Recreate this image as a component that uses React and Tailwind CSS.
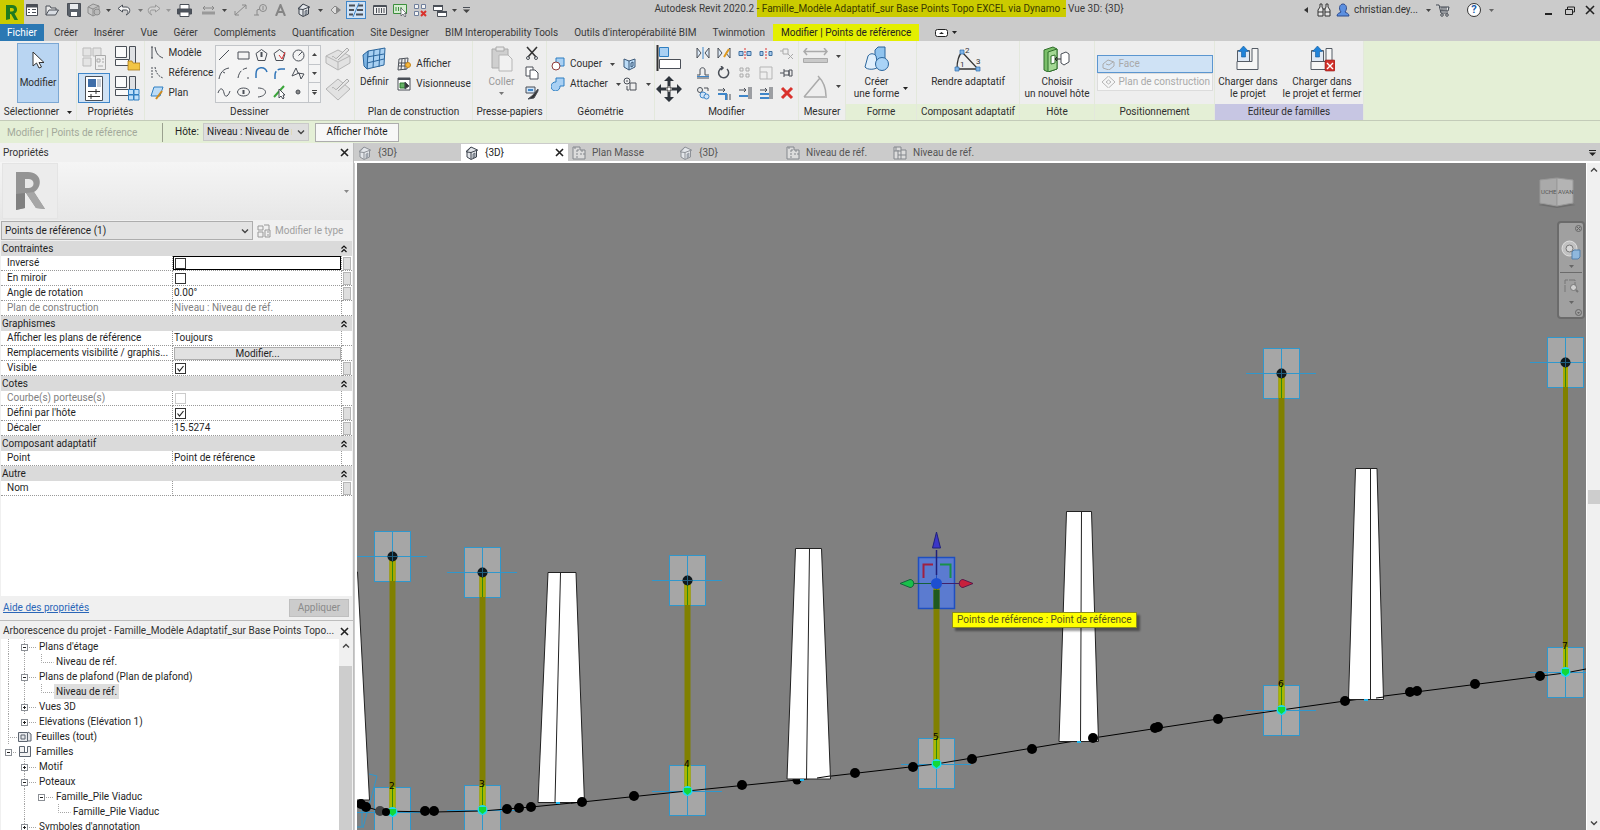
import React, { useState } from 'react';
import clsx from 'clsx';

function Svg({ w, h, children, className }) {
  return (
    <svg width={w} height={h} viewBox={`0 0 ${w} ${h}`} fill="none" stroke="#4a4f57" aria-hidden="true" className={clsx("shrink-0", className)}>
      {children}
    </svg>
  );
}

function Arrow({ className, color = "#444" }) {
  return (
    <Svg w={5} h={3} className={className}>
      <path d="M0 0h5L2.5 3z" fill={color} stroke="none" />
    </Svg>
  );
}

function CloseIcon({ size = 9 }) {
  return (
    <Svg w={size} h={size}>
      <path d={`M1 1L${size - 1} ${size - 1}M${size - 1} 1L1 ${size - 1}`} stroke="#222" strokeWidth="1.6" />
    </Svg>
  );
}

function Chevron({ up, className }) {
  return (
    <Svg w={8} h={6} className={className}>
      <path d={up ? "M1 4.5l3-3 3 3" : "M1 1.5l3 3 3-3"} stroke="#444" strokeWidth="1.4" />
    </Svg>
  );
}

function HouseIcon({ faded }) {
  const line = faded ? "#8d9197" : "#3c434d";
  return (
    <Svg w={14} h={14}>
      <path d="M1 5.5L6 1l6.5 3-1 1v6L6 13.500 2 11V6z" fill="#e3e6ea" stroke={line} />
      <path d="M6 1L1.500 6M6 6.500V13M6 6.500L12.500 4M2 6l4 .5" stroke={line} />
      <path d="M8 8l2-1v4l-2 1z" fill="#aab2bd" stroke={line} strokeWidth=".6" />
    </Svg>
  );
}

function SheetIcon({ double }) {
  return (
    <Svg w={14} h={14}>
      <path d="M1 1h7v3h5v9H1z" fill="#dcdcdc" stroke="#83878c" />
      {double
        ? <path d="M5 4v9M1 5h7M8 4v9M5 9h8M3 1v4" stroke="#83878c" />
        : <path d="M5 4h3M5 4v9M8 8h5M10 4v2M3 1v2" stroke="#83878c" strokeDasharray="2 1" />}
    </Svg>
  );
}

/* Quick access toolbar */
function QuickAccess() {
  const items = [
    ["w-4", "Propriétés", <Svg w={12} h={12}><path d="M.5.5h11v11H.5z" fill="#fff" /><path d="M0 2h12" strokeWidth="3" /><path d="M2 5.500h2M2 8.500h2M6 5.500h4M6 8.500h4" /></Svg>],
    ["w-6", "Ouvrir", <Svg w={14} h={11}><path d="M1 10V1h4l1 2h5v2" fill="#e8e8e8" /><path d="M1 10l3-5h9.500l-3 5z" fill="#d9dde3" /></Svg>],
    ["w-5", "Enregistrer", <Svg w={14} h={14}><path d="M.5.5h13v13H2l-1.500-1.500z" fill="#596069" /><path d="M3 1h8v5H3z" fill="#e9ecef" stroke="none" /><path d="M4 9h6v4H4z" fill="#fff" stroke="none" /></Svg>],
    ["w-5", "Synchroniser", <Svg w={14} h={14}><path d="M1 4l5-3 6 2v7l-6 3-5-3z" fill="#c4c4c4" stroke="#8d8d8d" /><path d="M6 6v7M1 4l5 2 6-3" stroke="#8d8d8d" /><circle cx="10" cy="9" r="3" fill="#b9b9b9" stroke="#8d8d8d" /></Svg>],
    ["w-2", "Options de synchronisation", <Arrow />],
    ["w-6", "Annuler", <Svg w={14} h={12}><path d="M5.500 1L1 4.500l4.500 3.500V6H9c2.500 0 2.500 3 0 5 5-1.500 5-8 0-8H5.500z" fill="#f4f4f4" /></Svg>],
    ["w-2", "Liste annuler", <Arrow color="#777" />],
    ["w-5", "Rétablir", <Svg w={14} h={12}><path d="M8.500 1L13 4.500 8.500 8V6H5c-2.500 0-2.500 3 0 5-5-1.500-5-8 0-8h3.500z" fill="#d2d2d2" stroke="#999" /></Svg>],
    ["w-2", "Liste rétablir", <Arrow color="#999" />],
    ["w-6", "Imprimer", <Svg w={15} h={13}><path d="M3 5V.5h9V5" fill="#fff" /><path d="M.5 5h14v5H.5z" fill="#4c535c" /><path d="M3 8h9v4.500H3z" fill="#fff" /></Svg>],
    ["w-6", "Mesurer", <Svg w={13} h={9}><path d="M1 2h11M3 0L1 2l2 2M10 0l2 2-2 2" stroke="#888" /><path d="M0 7h13" stroke="#999" strokeWidth="3" /></Svg>],
    ["w-2", "Options de mesure", <Arrow />],
    ["w-6", "Cote alignée", <Svg w={13} h={12}><path d="M1 11L12 1M1 7v4h4M8 1h4v4" stroke="#8a8a8a" /></Svg>],
    ["w-4", "Étiquette", <Svg w={13} h={12}><circle cx="9" cy="4" r="3.500" stroke="#8a8a8a" /><path d="M9 2v4M6 5L3 6v5M0 11h5" stroke="#8a8a8a" /></Svg>],
    ["w-6", "Texte", <Svg w={11} h={12}><path d="M1 12L5.500 1 10 12M2.500 8h6" stroke="#858585" strokeWidth="2" /></Svg>],
    ["w-6", "Vue 3D", <HouseIcon />],
    ["w-2", "Options vue 3D", <Arrow />],
    ["w-[22px]", "Coupe", <Svg w={12} h={12}><path d="M6 2l4 4-4 4-4-4z" fill="#ddd" stroke="#888" /><path d="M7 2l5 4-5 4z" fill="#888" stroke="none" /></Svg>],
    ["w-5 h-[18px] border border-[#3f86c9] bg-[#cfe2f5]", "Lignes fines", <Svg w={16} h={14}><path d="M1 2.500h6M10 2.500h5M1 7h5M9 7h6M1 11.500h4M8 11.500h7" strokeWidth="2" /><path d="M11 0L5 14" stroke="#3f86c9" /></Svg>],
    ["w-6 pl-1", "Fermer les vues masquées", <Svg w={14} h={10}><path d="M.5.5h13v9H.5z" fill="#eee" /><path d="M0 1.500h14M3.500 3v5M6 3v5M8.500 3v5M11 3v5" /></Svg>],
    ["w-5", "Interface utilisateur", <Svg w={14} h={13}><path d="M.5.5h13v9H.5z" fill="#d6ecd2" stroke="#3c8f3c" /><path d="M3 3v4M5.500 3v4M8 3v4" stroke="#3c8f3c" /><path d="M8 4v8l2-2 2 3 1-1-1.500-2.500h2z" fill="#fff" strokeWidth=".7" /></Svg>],
    ["w-5", "Fermer inactives", <Svg w={13} h={13}><path d="M.5.5h4v4h-4zM7.500.5h4v4h-4zM.5 7.500h4v4h-4z" fill="#f4f4f4" stroke="#6f7f9c" /><path d="M7 7l5 5M12 7l-5 5" stroke="#d9322c" strokeWidth="2" /></Svg>],
    ["w-5", "Changer de fenêtre", <Svg w={14} h={13}><path d="M.5 1.500h9v5h-9z" fill="#fff" /><path d="M0 2h10" strokeWidth="2" /><path d="M4.500 7.500h9v5h-9z" fill="#fff" /><path d="M4 8h10" strokeWidth="2" /></Svg>],
    ["w-2", "Options de fenêtre", <Arrow />],
    ["w-4", "Personnaliser", <Svg w={7} h={6}><path d="M0 .5h7" /><path d="M0 2.500h7L3.500 6z" fill="#444" stroke="none" /></Svg>],
  ];
  return (
    <div className="flex shrink-0 items-center h-5">
      {items.map(([width, label, icon], idx) => (
        <button key={idx} aria-label={label} className={clsx("flex shrink-0 items-center justify-center", width)}>
          {icon}
        </button>
      ))}
    </div>
  );
}

function TitleBar() {
  return (
    <header className="flex items-start h-6 overflow-hidden">
      <button aria-label="Revit" className="flex items-center justify-center w-6 h-6 shrink-0 bg-[#cbcb00]">
        <Svg w={14} h={15}>
          <path d="M1 0h6c6 0 6.500 7 2.500 8.500L13 15H9.500L6 9H5v5l-4 1z" fill="#1f7a1f" stroke="none" />
          <path d="M5 3h2c2.500 0 2.500 3.500 0 3.500H5z" fill="#cbcb00" stroke="none" />
        </Svg>
      </button>
      <QuickAccess />
      <h1 className="flex-1 text-center whitespace-nowrap leading-[17px] text-[#3a3a3a]">
        Autodesk Revit 2020.2{' '}
        <mark className="inline-block bg-[#cbcb00] text-[#3a3a00]">- Famille_Modèle Adaptatif_sur Base Points Topo EXCEL via Dynamo -</mark>
        {' '}Vue 3D: {'{3D}'}
      </h1>
      <div className="flex items-center shrink-0 h-5">
        <button aria-label="Réduire la recherche" className="w-2">
          <Svg w={4} h={6}><path d="M4 0v6L0 3z" fill="#333" stroke="none" /></Svg>
        </button>
        <button aria-label="Rechercher" className="w-6 flex justify-center">
          <Svg w={14} h={14}>
            <path d="M3 1h2v3l1 2v7H1V7l2-3zM9 1h2v3l2 3v6H8V6l1-2z" fill="#e6e6e6" stroke="#333" />
            <path d="M6 6h2M1 9h5M8 9h5" stroke="#333" />
          </Svg>
        </button>
        <button className="flex items-center gap-1 text-[#333]">
          <Svg w={14} h={14}>
            <path d="M1 13c0-3 3-3 4-4-3-4-1-8 2-8s5 4 2 8c1 1 4 1 4 4z" fill="#5b8fe0" stroke="#2d4c8f" />
          </Svg>
          <span>christian.dey...</span>
          <Arrow className="ml-1" />
        </button>
        <button aria-label="Autodesk App Store" className="flex justify-center w-6">
          <Svg w={14} h={13}>
            <path d="M0 1h3l2 8h7M4 3h9l-1 4H5" fill="#eee" stroke="#3c434d" />
            <path d="M6 3v4M8 3v4M10 3v4" stroke="#3c434d" />
            <circle cx="6" cy="11" r="1.300" /><circle cx="11" cy="11" r="1.300" />
          </Svg>
        </button>
        <button aria-label="Aide" className="flex items-center gap-2 ml-3">
          <span className="w-[14px] h-[14px] rounded-full border border-[#333] bg-white text-[11px] leading-3 font-bold text-[#1d5fae] text-center">?</span>
          <Arrow color="#666" />
        </button>
        <button aria-label="Réduire" className="ml-[42px] w-6 flex justify-center pt-2"><Svg w={7} h={2}><path d="M0 1h7" stroke="#222" strokeWidth="2" /></Svg></button>
        <button aria-label="Restaurer" className="w-5 flex justify-center">
          <Svg w={10} h={9}><path d="M2.500 3V1h7v5h-2M.5 3.500h7v5h-7z" stroke="#222" /></Svg>
        </button>
        <button aria-label="Fermer" className="w-5 flex justify-center"><CloseIcon size={10} /></button>
      </div>
    </header>
  );
}

function RibbonTabs() {
  const tabs = ["Créer", "Insérer", "Vue", "Gérer", "Compléments", "Quantification", "Site Designer", "BIM Interoperability Tools", "Outils d'interopérabilité BIM", "Twinmotion"];
  return (
    <nav className="flex items-center h-[17px] whitespace-nowrap text-[#3a3a3a]">
      <button className="w-11 h-full shrink-0 bg-[#2b78b3] text-white">Fichier</button>
      <div className="flex pl-[2px]">
        {tabs.map((tab) => (
          <button key={tab} className="px-2">{tab}</button>
        ))}
      </div>
      <button className="h-full px-2 bg-[#e4ef00] text-[#222]">Modifier | Points de référence</button>
      <button aria-label="Réduire le ruban" className="flex items-center gap-1 ml-4">
        <Svg w={13} h={8}><rect x=".5" y=".5" width="12" height="7" rx="2" fill="#fff" stroke="#222" /><path d="M4 5h5L6.500 3z" fill="#222" stroke="none" /></Svg>
        <Arrow color="#222" />
      </button>
    </nav>
  );
}

function Panel({ title, width, tone, titleIcon, children }) {
  return (
    <section className={clsx("flex flex-col shrink-0 bg-[#eeeeee] border-r border-[#e3e8dc]", width)}>
      <div className="flex h-[63px] pt-[2px] justify-center">{children}</div>
      <h2 className={clsx("flex h-4 items-center justify-center gap-2 whitespace-nowrap", tone)}>
        {title}
        {titleIcon}
      </h2>
    </section>
  );
}

function BigButton({ icon, lines, className, arrow }) {
  return (
    <button className={clsx("flex flex-col items-center whitespace-nowrap leading-3", className)}>
      <span className="flex items-center justify-center h-7 mt-[2px] mb-[3px]">{icon}</span>
      {lines.map((line) => <span key={line}>{line}</span>)}
      {arrow}
    </button>
  );
}

function SmallButton({ icon, label, arrow, className }) {
  return (
    <button aria-label={arrow || label} className={clsx("flex items-center h-5 gap-1 whitespace-nowrap", className)}>
      <span className="flex justify-center w-4">{icon}</span>
      {label}
      {arrow && <Arrow className="ml-1" />}
    </button>
  );
}

const drawIcons = [
  <path d="M2 12L12 2" />,
  <path d="M2 4h11v7H2z" />,
  <><path d="M7.500 1.500l5.500 4-2 7H4l-2-7z" /><path d="M7.500 4v5" strokeWidth="2" /></>,
  <><path d="M7.500 1.500l5.500 4-2 7H4l-2-7z" /><path d="M7 7l3 4 3-7" stroke="#d33" /></>,
  <><circle cx="7.500" cy="7.500" r="5.500" /><path d="M7.500 7.500L11 4" /></>,
  <path d="M2 13c1-6 4-10 10-11M6 6l2 1" />,
  <path d="M2 12c1-6 4-9 9-10M12 11v2" strokeDasharray="8 2" />,
  <path d="M2 12V8c0-8 9-8 11-2" stroke="#2f74b8" strokeWidth="1.500" />,
  <path d="M3 13V9c0-4 3-6 6-6h4" stroke="#2f74b8" strokeWidth="1.500" strokeDasharray="8 2" />,
  <path d="M1 10l4-8 2 5 6 1-3 5-2-6z" />,
  <path d="M1 8c2-6 5-5 6 0s4 4 6-2" />,
  <><ellipse cx="7.500" cy="7" rx="6" ry="4" /><path d="M7.500 5v4" strokeWidth="2" /></>,
  <path d="M4 3c10 0 10 8 0 9" />,
  <><path d="M2 12L12 1" stroke="#3aa53a" strokeWidth="2" /><path d="M7 4v9l2-2 2 3 1-1-1-3h2z" fill="#fff" /></>,
  <circle cx="7" cy="7" r="2" fill="#888" />,
];

const modifyIcons = [
  <><path d="M1 2v10l4-5zM13 2v10L9 7z" fill="#dbe9f7" /><path d="M7 1v12" stroke="#3f86c9" /></>,
  <><path d="M1 2v10l4-5zM13 2v10L9 7z" fill="#dbe9f7" /><path d="M12 3l-5 8" stroke="#e09a1f" strokeWidth="2" /></>,
  <><path d="M1 5.500h4v4H1zM9 5.500h4v4H9z" fill="#a9cdf0" stroke="#3f6f9f" /><path d="M7 2v11" stroke="#d33" strokeDasharray="2 1" /></>,
  <><path d="M1 5.500h3v4H1zM10 5.500h3v4h-3z" fill="#a9cdf0" stroke="#3f6f9f" /><path d="M7 2v11" stroke="#d33" strokeDasharray="2 1" /></>,
  <path d="M3 3h5v5H3zM0 5h3M8 8l5 5M13 8l-5 5" stroke="#aaa" />,
  <><path d="M1 12h12M1 9h3V4c0-3 5-3 5 0v5h4" /><path d="M1 10.500h12" stroke="#3f86c9" /></>,
  <path d="M10 3a5 5 0 1 1-5-1M4 0l2 2-2 2" strokeWidth="1.500" />,
  <path d="M2 2h3v3H2zM8 2h3v3H8zM2 8h3v3H2zM8 8h3v3H8z" stroke="#aaa" />,
  <path d="M1 1h12v12H1zM1 6h7v7" stroke="#b5b5b5" />,
  <path d="M4 7H0M4 3v8M4 5h5v4H4M9 4v6h3V4z" />,
  <><circle cx="4" cy="4" r="2.500" /><circle cx="7" cy="9" r="3" fill="#cfe3f7" stroke="#3f86c9" /><circle cx="10.500" cy="10.500" r="2.500" fill="#cfe3f7" stroke="#3f86c9" /><path d="M8 2h4v3" /></>,
  <><path d="M1 4h7M6 2l2 2-2 2M10 8v6M13 8v6" /><path d="M1 8h8v6" stroke="#3f86c9" strokeWidth="2" /></>,
  <><path d="M1 4h7M6 2l2 2-2 2M11 1v12M13 1v12" /><path d="M1 10h9" stroke="#3f86c9" strokeWidth="2" /></>,
  <><path d="M1 4h7M6 2l2 2-2 2M11 1v12M13 1v12" /><path d="M1 8h9M1 12h9" stroke="#3f86c9" strokeWidth="2" /></>,
  <path d="M2 2l10 10M12 2L2 12" stroke="#d9322c" strokeWidth="3" />,
];

function LoadIcon({ close }) {
  return (
    <Svg w={26} h={26}>
      <path d="M2.500 4.500h12v11h-12z" fill="#dfe9f5" stroke="#555c66" />
      <path d="M17 2.500h6v21h-21v-8h15z" fill="#f6f6f6" stroke="#555c66" />
      <path d="M8.500 0l5 5.500h-3V11h-4V5.500h-3z" fill="#1f83da" stroke="#12599b" strokeWidth=".6" />
      {close && <><rect x="16" y="14" width="10" height="11" rx="1" fill="#d0312b" stroke="#8f1d19" strokeWidth=".6" /><path d="M18 17l6 6M24 17l-6 6" stroke="#fff" strokeWidth="1.400" /></>}
    </Svg>
  );
}

function TypeIcon({ extra }) {
  return (
    <Svg w={26} h={26}>
      <path d="M1.500 1.500h11v11h-11zM1.500 14.500h13v6h-13z" fill="#fafafa" />
      <path d="M15.500 1.500h6v19h-7v-6h1z" fill="#dfe1e4" />
      {extra}
    </Svg>
  );
}

function SketchPlane({ flat }) {
  return (
    <Svg w={26} h={26}>
      <path d={flat ? "M13 3l12 10-12 11L1 13z" : "M1 11l12-6 12 6v7l-12 7-12-7z"} fill="#e2e2e2" stroke="#b5b5b5" />
      {!flat && <path d="M1 11l12 6 12-6M13 17v8" stroke="#b5b5b5" />}
      <path d="M7 12c2-2 3 3 5 1L22 3l2 2-11 10" fill="#e8e8e8" stroke="#a9a9a9" />
    </Svg>
  );
}

function Ribbon() {
  const green = "bg-[#e4efd6]";
  return (
    <div className="flex bg-[#e4efd6] border-b border-[#c3cbb9] text-[#2f2f2f] overflow-hidden">
      <Panel title="Sélectionner" width="w-[77px]" titleIcon={<Arrow color="#222" />}>
        <BigButton
          className="w-[42px] h-[60px] border border-[#7ba7d3] bg-[#b9d5f2]"
          lines={["Modifier"]}
          icon={<Svg w={14} h={18}><path d="M2 1v14l3.500-3 2.500 5 2.500-1L8 11.500h5z" fill="#fff" stroke="#333" /></Svg>}
        />
      </Panel>

      <Panel title="Propriétés" width="w-[68px]">
        <div className="grid grid-cols-2 grid-rows-2 w-full h-[60px] place-items-center">
          <button aria-label="Propriétés du type">
            <Svg w={26} h={26}><path d="M2 3h8v8H2zM12 3h8v8h-8zM2 13h8v8H2z" fill="#e4e4e4" stroke="#bbb" /><path d="M14.500 10.500h10v14h-10z" fill="#eee" stroke="#aaa" /><path d="M16 14h3v3h-3zM21 14h2M21 17h2M17 21h5" stroke="#aaa" /></Svg>
          </button>
          <button aria-label="Catégorie de famille"><TypeIcon extra={<path d="M14 16h4l1 2h7v7H14z" fill="#f2c544" stroke="#a9781a" strokeWidth=".8" />} /></button>
          <button aria-label="Propriétés" className="flex items-center justify-center w-8 h-[30px] border border-[#3f86c9] bg-[#cfe2f5]">
            <Svg w={18} h={25}><path d="M.5.5h17v24H.5z" fill="#fff" /><path d="M3 3h8v8H3z" fill="#3f6ea8" stroke="none" /><path d="M12 3h4v8h-4z" fill="#c5ccd5" stroke="none" /><path d="M3 15.500h12M3 20.500h12M11 13v5M6 18v5" stroke="#333" /></Svg>
          </button>
          <button aria-label="Types de famille"><TypeIcon extra={<path d="M14.500 14.500h5v5h-5zM20 14.500h5v5h-5zM14.500 20h5v5h-5zM20 20h5v5h-5z" fill="#bfe0fa" stroke="#2f7fc2" />} /></button>
        </div>
      </Panel>

      <Panel title="Dessiner" width="w-[210px]">
        <div className="w-[68px] pl-[2px] text-left">
          <SmallButton label="Modèle" icon={<Svg w={14} h={14}><path d="M2 1v11M5 1c1 6 3 9 8 11M1 1h2M1 12h2" /></Svg>} />
          <SmallButton label="Référence" icon={<Svg w={14} h={14}><path d="M2 1v11M5 1c1 6 3 9 8 11" strokeDasharray="2 1" /></Svg>} />
          <SmallButton label="Plan" icon={<Svg w={14} h={14}><path d="M4 1h9l-3 9H1z" fill="#bcdcf7" stroke="#2f7fc2" /><path d="M12 5l-6 8" stroke="#d08a1c" strokeWidth="2" /></Svg>} />
        </div>
        <div className="flex h-[58px] mt-[2px] border border-[#c2c5c9] bg-[#f4f4f4]">
          <div className="grid grid-cols-5 w-[92px] place-items-center">
            {drawIcons.map((icon, idx) => (
              <button key={idx} aria-label={`Outil de dessin ${idx + 1}`}><Svg w={15} h={15}>{icon}</Svg></button>
            ))}
          </div>
          <div className="grid grid-rows-3 w-3 border-l border-[#c2c5c9] divide-y divide-[#c2c5c9]">
            <button aria-label="Ligne précédente" className="flex items-center justify-center"><Svg w={5} h={3}><path d="M0 3h5L2.500 0z" fill="#444" stroke="none" /></Svg></button>
            <button aria-label="Ligne suivante" className="flex items-center justify-center"><Arrow /></button>
            <button aria-label="Tous les outils" className="flex flex-col items-center justify-center gap-px"><span className="w-[5px] h-px bg-[#444]" /><Arrow /></button>
          </div>
        </div>
        <div className="flex flex-col justify-around w-8 pl-1">
          <button aria-label="Dessiner sur la face"><SketchPlane /></button>
          <button aria-label="Dessiner sur le plan de construction"><SketchPlane flat /></button>
        </div>
      </Panel>

      <Panel title="Plan de construction" width="w-[118px]">
        <BigButton className="w-9" lines={["Définir"]} icon={<Svg w={24} h={25}><path d="M6 4l17-3-1 17-17 4z" fill="#a8d0f2" stroke="#2a659c" /><path d="M12 3l-1 18M18 2l-1 18M5 10l17-3M5 16l17-4" stroke="#2a659c" /><path d="M1 8l5-4-1 18-3-3z" fill="#7db4e3" stroke="#2a659c" /></Svg>} />
        <div className="pt-[11px] pl-1">
          <SmallButton label="Afficher" icon={<Svg w={14} h={14}><path d="M2 2l9-1-1 11-9 1zM5 2L4 13M8 2v11M2 6h9M2 9h9" /><circle cx="11" cy="8" r="2.500" fill="#f6b73c" stroke="#c4841a" /></Svg>} />
          <SmallButton label="Visionneuse" icon={<Svg w={14} h={14}><path d="M1 1h12v12H1z" fill="#fff" /><path d="M1 2h12" strokeWidth="2" /><path d="M3 6h5v5H3z" fill="#67b267" stroke="#2d7a2d" /><path d="M8 5v7l4-3z" fill="#333" /></Svg>} />
        </div>
      </Panel>

      <Panel title="Presse-papiers" width="w-[74px]">
        <BigButton className="w-11 text-[#999]" lines={["Coller"]} arrow={<Arrow className="mt-1" color="#777" />} icon={<Svg w={24} h={26}><path d="M2 3h16v19H2z" fill="#cfcfcf" stroke="#aaa" /><path d="M6 1h8v4H6z" fill="#e6e6e6" stroke="#aaa" /><path d="M9 9h9l4 4v12H9z" fill="#f1f1f1" stroke="#b5b5b5" /></Svg>} />
        <div>
          <SmallButton icon={<Svg w={14} h={14}><path d="M2 1l9 10M12 1L3 11" strokeWidth="1.600" stroke="#333" /><circle cx="3" cy="12" r="1.500" /><circle cx="11" cy="12" r="1.500" /></Svg>} />
          <SmallButton icon={<Svg w={14} h={14}><path d="M1 1h7v9H1z" fill="#fff" /><path d="M5 4h5l3 3v6H5z" fill="#fff" /></Svg>} />
          <SmallButton icon={<Svg w={14} h={14}><path d="M1 1h9v6H1z" fill="#cfe3f7" /><path d="M3 4h5" stroke="#3f86c9" strokeWidth="2" /><path d="M13 3L8 9l-5 4 6-1 4-7z" fill="#333" /></Svg>} />
        </div>
      </Panel>

      <Panel title="Géométrie" width="w-[108px]">
        <div className="pt-[11px] w-[72px]">
          <SmallButton label="Couper" arrow="Couper" icon={<Svg w={14} h={14}><path d="M5 1h8v8H5z" fill="#a9d0f3" stroke="#2f7fc2" /><circle cx="5" cy="9" r="4" fill="#fff" stroke="#8f3b3b" /></Svg>} />
          <SmallButton label="Attacher" arrow="Attacher" icon={<Svg w={14} h={14}><path d="M5 1h8v8H9a4.500 4.500 0 1 1-4-4z" fill="#a9d0f3" stroke="#2f7fc2" /></Svg>} />
        </div>
        <div className="pt-[11px]">
          <SmallButton icon={<Svg w={14} h={14}><path d="M1 2l5 2 6-2v8l-6 3-5-3z" fill="#bcdcf7" stroke="#3b5878" /><path d="M6 4v9M8 6l2-1v4l-2 1z" stroke="#3b5878" /></Svg>} />
          <SmallButton arrow="Démolir" icon={<Svg w={14} h={14}><circle cx="4" cy="4" r="3" /><path d="M7 6h6v7H7zM4 9v4h2M3 4h2" /></Svg>} />
        </div>
      </Panel>

      <Panel title="Modifier" width="w-[144px]">
        <div className="flex flex-col justify-around w-9">
          <button aria-label="Aligner"><Svg w={26} h={26}><path d="M1.500 0v26" stroke="#333" strokeWidth="2" /><path d="M3.500 2.500h9v9h-9z" fill="#a9d0f3" stroke="#2f7fc2" /><path d="M3.500 14.500h21v9h-21z" fill="#fff" /></Svg></button>
          <button aria-label="Déplacer"><Svg w={26} h={26}><path d="M13 0l5 5h-3.500v5h-3V5H8zM13 26l5-5h-3.500v-5h-3v5H8zM0 13l5-5v3.500h5v3H5V18zM26 13l-5-5v3.500h-5v3h5V18z" fill="#2e343c" stroke="none" /><path d="M11 11h4v4h-4z" fill="#fff" stroke="#333" /></Svg></button>
        </div>
        <div className="grid grid-cols-5 w-[105px] h-[60px] place-items-center">
          {modifyIcons.map((icon, idx) => (
            <button key={idx} aria-label={`Outil de modification ${idx + 1}`}><Svg w={14} h={14}>{icon}</Svg></button>
          ))}
        </div>
      </Panel>

      <Panel title="Mesurer" width="w-[47px]">
        <div className="flex flex-col justify-around">
          <button aria-label="Mesurer une distance" className="flex items-center gap-2"><Svg w={25} h={16}><path d="M1 3.500h23M4 0L1 3.500 4 7M21 0l3 3.500L21 7" stroke="#aaa" strokeWidth="1.500" /><path d="M.5 10.500h24v4H.5z" fill="#c9c9c9" stroke="#aaa" /></Svg><Arrow /></button>
          <button aria-label="Mesurer un angle" className="flex items-center gap-2"><Svg w={25} h={25}><path d="M1 23h23M1 23L17 4M15 2c5 5 8 12 8 20" stroke="#aaa" strokeWidth="1.500" /></Svg><Arrow /></button>
        </div>
      </Panel>

      <Panel title="Forme" width="w-[71px]" tone={green}>
        <BigButton lines={["Créer", "une forme"]} icon={<Svg w={26} h={26}><path d="M11 4l3-3h7v13l-3 2h-7z" fill="#8fc3ee" stroke="#2a659c" /><path d="M4 10c2-3 6-3 8 0l2 11c-3 3-11 3-13 0z" fill="#e0effc" stroke="#2a659c" /><circle cx="18" cy="18" r="6.500" fill="#a9d3f6" stroke="#2a659c" /></Svg>} />
        <Arrow className="mt-11 ml-1" color="#222" />
      </Panel>

      <Panel title="Composant adaptatif" width="w-[103px]" tone={green}>
        <BigButton
          lines={["Rendre adaptatif"]}
          icon={
            <Svg w={28} h={27}>
              <path d="M3 23C3 16 5 9 8 6l16 17z" stroke="#333" strokeWidth="1.300" />
              <path d="M1 21h4v4H1zM6 4h4v4H6zM22 21h4v4h-4z" fill="#7fb4e8" stroke="#2f6fae" strokeWidth=".7" />
              <g fill="#333" stroke="none" fontSize="8"><text x="6" y="21">1</text><text x="11" y="7">2</text><text x="22" y="18">3</text></g>
            </Svg>
          }
        />
      </Panel>

      <Panel title="Hôte" width="w-[75px]" tone={green}>
        <BigButton lines={["Choisir", "un nouvel hôte"]} icon={<Svg w={27} h={26}><path d="M1 4l9-3 4 2v20l-9 3-4-2z" fill="#7bbf6a" stroke="#2f6e2a" /><path d="M5 6l9-3v20l-9 3z" fill="#a3d893" stroke="#2f6e2a" /><path d="M8 10l4-1v8l-4 1z" fill="#fff" stroke="#2f6e2a" /><path d="M18 13h-6M14 11l-2 2 2 2" stroke="#222" /><path d="M18 8l5-2 3 2v8l-5 3-3-2z" fill="#fff" /></Svg>} />
      </Panel>

      <Panel title="Positionnement" width="w-[120px]" tone={green}>
        <div className="flex flex-col w-[116px] mt-3 text-[#a9a9a9]">
          <button className="flex items-center gap-1 h-[18px] px-1 border border-[#5b96d0] bg-[#cfe2f5]">
            <Svg w={13} h={12}><path d="M1 6l5-4 6 2v4l-5 4-6-2zM4 6l3 1 4-3" stroke="#aaa" /></Svg>
            Face
          </button>
          <button className="flex items-center gap-1 h-[18px] px-1 border border-[#dcdcdc] bg-[#f6f6f6] whitespace-nowrap">
            <Svg w={13} h={12}><path d="M6.500 0L13 6l-6.500 6L0 6zM6.500 4L9 6 6.500 8 4 6z" stroke="#b5b5b5" /></Svg>
            Plan de construction
          </button>
        </div>
      </Panel>

      <Panel title="Editeur de familles" width="w-[149px]" tone="bg-[#c7c6e3]">
        <BigButton className="w-[66px]" lines={["Charger dans", "le projet"]} icon={<LoadIcon />} />
        <BigButton className="w-[82px]" lines={["Charger dans", "le projet et fermer"]} icon={<LoadIcon close />} />
      </Panel>
    </div>
  );
}

function OptionsBar() {
  return (
    <div className="flex items-center h-[22px] bg-[#e4efd6] whitespace-nowrap">
      <span className="w-[163px] h-[19px] pl-[7px] border-r border-[#9aa08f] leading-[19px] text-[#a3a99b]">Modifier | Points de référence</span>
      <label htmlFor="host" className="w-10 pl-3">Hôte:</label>
      <span className="relative flex items-center">
        <select id="host" className="appearance-none w-[106px] h-[18px] pl-[3px] pr-4 border border-[#c9c9c9] bg-[#dedede]">
          <option>Niveau : Niveau de réf.</option>
        </select>
        <Chevron className="absolute right-1 pointer-events-none" />
      </span>
      <button className="w-[84px] h-[19px] ml-[6px] border border-[#adadad] bg-[#f7f7f7]">Afficher l'hôte</button>
    </div>
  );
}

const groups = [
  { name: "Contraintes", rows: [
    { label: "Inversé", type: "check", focus: true, btn: true },
    { label: "En miroir", type: "check", btn: true },
    { label: "Angle de rotation", value: "0.00°", btn: true },
    { label: "Plan de construction", value: "Niveau : Niveau de réf.", disabled: true },
  ] },
  { name: "Graphismes", rows: [
    { label: "Afficher les plans de référence", value: "Toujours" },
    { label: "Remplacements visibilité / graphis...", type: "button", value: "Modifier..." },
    { label: "Visible", type: "check", checked: true, btn: true },
  ] },
  { name: "Cotes", rows: [
    { label: "Courbe(s) porteuse(s)", type: "check", disabled: true },
    { label: "Défini par l'hôte", type: "check", checked: true, btn: true },
    { label: "Décaler", value: "15.5274", btn: true },
  ] },
  { name: "Composant adaptatif", rows: [{ label: "Point", value: "Point de référence" }] },
  { name: "Autre", rows: [{ label: "Nom", value: "", btn: true }] },
];

function CheckBox({ label, defaultChecked, disabled }) {
  return (
    <span className="grid w-[11px] h-[11px] ml-px mt-px">
      <input
        type="checkbox"
        aria-label={label}
        defaultChecked={defaultChecked}
        disabled={disabled}
        className="peer col-start-1 row-start-1 appearance-none w-[11px] h-[11px] border border-[#333] bg-white disabled:border-[#ccc]"
      />
      <Svg w={11} h={11} className="col-start-1 row-start-1 invisible peer-checked:visible pointer-events-none">
        <path d="M2.500 5.500l2 2.500 4-5" stroke="#222" strokeWidth="1.200" />
      </Svg>
    </span>
  );
}

function PropertyRow({ row }) {
  const cell = "h-[15px] p-0 border-b border-dotted border-[#999]";
  return (
    <tr className={clsx("leading-[14px]", row.disabled && "text-[#808080]")}>
      <th scope="row" className={clsx(cell, "border-r pl-[6px] font-normal text-left truncate")}>{row.label}</th>
      <td className={clsx(cell, "border-r")}>
        <div className={clsx("flex items-center h-[14px] pl-px", row.focus && "outline outline-black -outline-offset-1")}>
          {row.type === "check" && <CheckBox label={row.label} defaultChecked={row.checked} disabled={row.disabled} />}
          {row.type === "button" && <button className="w-full h-[13px] border border-[#adadad] bg-[#e1e1e1] leading-[11px]">{row.value}</button>}
          {!row.type && (
            <input type="text" aria-label={row.label} defaultValue={row.value} disabled={row.disabled} className="w-full h-[14px] bg-transparent" />
          )}
        </div>
      </td>
      <td className={clsx(cell, "pl-px")}>
        {row.btn && <button aria-label={`Associer ${row.label}`} className="block w-2 h-[13px] border border-[#b5b5b5] bg-[#dedede]" />}
      </td>
    </tr>
  );
}

function PropertiesPanel() {
  return (
    <section className="flex flex-col flex-1 min-h-0 border-b border-[#bdbdbd]">
      <div className="flex items-center justify-between h-[19px] pl-[3px] pr-1 text-[#333]">
        <h2>Propriétés</h2>
        <button aria-label="Fermer les propriétés"><CloseIcon /></button>
      </div>
      <div className="flex items-center justify-between h-[58px] pl-[2px] pr-1 bg-linear-to-b from-[#f5f5f5] to-[#e7e7e7]">
        <span className="flex items-center justify-center w-14 h-14 border border-[#e4e4e4] bg-[#ececec]">
          <Svg w={32} h={38}>
            <path d="M2 0h12c14 0 15 15 6 20l11 17-9-1-10-15h-1v15l-9 2z" fill="#949494" stroke="none" />
            <path d="M11 7h4c6 0 6 9 0 9h-4z" fill="#e8e8e8" stroke="none" />
            <path d="M11 21v15l-9 2V22z" fill="#808080" stroke="none" />
            <path d="M20 20l11 17-9-1-10-15z" fill="#a6a6a6" stroke="none" />
          </Svg>
        </span>
        <button aria-label="Sélecteur de type"><Arrow color="#888" /></button>
      </div>
      <div className="flex items-center h-[21px] pl-px">
        <span className="relative flex items-center">
          <select aria-label="Type d'élément" className="appearance-none w-[252px] h-[19px] pl-[3px] border border-[#adadad] bg-[#e3e3e3]">
            <option>Points de référence (1)</option>
          </select>
          <Chevron className="absolute right-1 pointer-events-none" />
        </span>
        <button disabled className="flex items-center gap-1 pl-1 whitespace-nowrap text-[#a0a0a0]">
          <Svg w={14} h={14}><path d="M1 2h5v4H1zM7 1h5v5M1 8h5v5H1zM8 6h5v7H8zM10 8h2M10 11h2" stroke="#999" /></Svg>
          Modifier le type
        </button>
      </div>
      <div className="flex-1 min-h-0 overflow-hidden mx-px bg-white">
        <table className="w-full table-fixed border-separate border-spacing-0">
          <colgroup>
            <col className="w-[172px]" />
            <col />
            <col className="w-[10px]" />
          </colgroup>
          {groups.map((group) => (
            <tbody key={group.name}>
              <tr>
                <th colSpan={3} scope="rowgroup" className="h-[15px] p-0 bg-[#dadada] font-normal">
                  <span className="flex items-center justify-between pl-px pr-[5px] leading-[15px]">
                    {group.name}
                    <Svg w={6} h={8}><path d="M.5 3.500L3 1l2.500 2.500M.5 7L3 4.500 5.500 7" stroke="#111" strokeWidth="1.200" /></Svg>
                  </span>
                </th>
              </tr>
              {group.rows.map((row) => <PropertyRow key={row.label} row={row} />)}
            </tbody>
          ))}
        </table>
      </div>
      <div className="flex items-center justify-between h-6 pl-[3px] pr-1">
        <a href="#aide" className="text-[#2a66b8] underline">Aide des propriétés</a>
        <button disabled className="w-[60px] h-[18px] border border-[#bfbfbf] bg-[#cccccc] text-[#8a8a8a]">Appliquer</button>
      </div>
    </section>
  );
}

/* Browser tree: x positions of the guide lines, the expander and the text */
const tree = [
  { label: "Plans d'étage", x: 36, box: 24, open: true, guides: [8, 24] },
  { label: "Niveau de réf.", x: 53, elbow: 41, guides: [8, 24] },
  { label: "Plans de plafond (Plan de plafond)", x: 36, box: 24, open: true, guides: [8, 24] },
  { label: "Niveau de réf.", x: 53, elbow: 41, guides: [8, 24] },
  { label: "Vues 3D", x: 36, box: 24, guides: [8, 24] },
  { label: "Elévations (Elévation 1)", x: 36, box: 24, guides: [8] },
  { label: "Feuilles (tout)", x: 33, icon: "sheets", guides: [8] },
  { label: "Familles", x: 33, box: 8, open: true, icon: "families", guides: [] },
  { label: "Motif", x: 36, box: 24, guides: [24] },
  { label: "Poteaux", x: 36, box: 24, open: true, guides: [24] },
  { label: "Famille_Pile Viaduc", x: 53, box: 41, open: true, guides: [24] },
  { label: "Famille_Pile Viaduc", x: 70, elbow: 58, guides: [24] },
  { label: "Symboles d'annotation", x: 36, box: 24, guides: [24] },
];

function TreeRow({ item, selected, onSelect }) {
  return (
    <li className="flex items-center h-[15px] whitespace-nowrap">
      <Svg w={item.x} h={15}>
        <g stroke="#a5a5a5" strokeDasharray="1 1">
          {item.guides.map((x) => <path key={x} d={`M${x - 0.5} 0v15`} />)}
          {item.elbow && <path d={`M${item.elbow - 0.5} 0v8.500h${item.x - item.elbow}`} />}
          {item.box && <path d={`M${item.box} 8.500H${item.icon ? 16 : item.x}`} />}
          {item.icon === "sheets" && <path d="M9 8.500h7" />}
        </g>
        {item.box && (
          <>
            <rect x={item.box - 3.5} y="5.500" width="6" height="6" fill="#fff" stroke="#8b8f95" />
            <path d={`M${item.box - 2} 8.500h3${item.open ? "" : "m-1.500-1.500v3"}`} stroke="#222" />
          </>
        )}
        {item.icon === "sheets" && <path d="M17.500 3.500h9v9h-9zM20 6h4v4h-4zM27 3l3 2v7h-3" fill="#e6e8eb" stroke="#5d6570" />}
        {item.icon === "families" && <path d="M18.500 2.500h5v6h-5zM26.500 2.500h3v10h-11v-4h8z" fill="#f3f3f3" stroke="#5d6570" />}
      </Svg>
      <button onClick={onSelect} className={clsx("px-[2px] h-[15px] leading-[15px]", selected && "bg-[#dedede]")}>{item.label}</button>
    </li>
  );
}

function ProjectBrowser() {
  const [selected, setSelected] = useState(3);
  return (
    <section className="flex flex-col h-[209px] shrink-0 pt-[2px]">
      <div className="flex items-center justify-between h-4 pl-[3px] pr-1 text-[#333]">
        <h2 className="whitespace-nowrap">Arborescence du projet - Famille_Modèle Adaptatif_sur Base Points Topo...</h2>
        <button aria-label="Fermer l'arborescence"><CloseIcon /></button>
      </div>
      <div className="flex flex-1 min-h-0 mx-px bg-white">
        <ul className="flex-1 overflow-hidden">
          {tree.map((item, idx) => (
            <TreeRow key={idx} item={item} selected={idx === selected} onSelect={() => setSelected(idx)} />
          ))}
        </ul>
        <div className="flex flex-col w-[13px] bg-[#f0f0f0]">
          <button aria-label="Défiler vers le haut" className="flex justify-center h-[27px] pt-1"><Chevron up /></button>
          <div className="flex-1 bg-[#cdcdcd]" />
        </div>
      </div>
    </section>
  );
}

function DocumentTabs() {
  const tabs = [
    { label: "{3D}", icon: <HouseIcon faded /> },
    { label: "{3D}", icon: <HouseIcon />, active: true },
    { label: "Plan Masse", icon: <SheetIcon /> },
    { label: "{3D}", icon: <HouseIcon faded /> },
    { label: "Niveau de réf.", icon: <SheetIcon /> },
    { label: "Niveau de réf.", icon: <SheetIcon double /> },
  ];
  return (
    <div className="flex items-center h-5 pt-px bg-[#cbcbcb] border-b-2 border-white">
      {tabs.map((tab, idx) => (
        <div key={idx} className={clsx("flex items-center w-[107px] h-full px-1", tab.active ? "bg-white text-[#222]" : "text-[#555]")}>
          <button className="flex flex-1 items-center gap-[6px]">
            {tab.icon}
            {tab.label}
          </button>
          {tab.active && <button aria-label="Fermer la vue"><CloseIcon /></button>}
        </div>
      ))}
      <button aria-label="Liste des vues" className="ml-auto mr-1">
        <Svg w={7} h={6}><path d="M0 .5h7" stroke="#222" /><path d="M0 2.500h7L3.500 6z" fill="#222" stroke="none" /></Svg>
      </button>
    </div>
  );
}

// top/bottom: y of the work planes, head/foot: y of their points
const columns = [
  { id: 2, x: 392, top: 531, head: 556, bottom: 787, foot: 812, bar: 6 },
  { id: 3, x: 482, top: 547, head: 572, bottom: 785, foot: 810, bar: 6 },
  { id: 4, x: 687, top: 555, head: 580, bottom: 765, foot: 791, bar: 6 },
  { id: 5, x: 936, top: 557, head: 583, bottom: 738, foot: 764, bar: 6, selected: true },
  { id: 6, x: 1281, top: 348, head: 373, bottom: 685, foot: 710, bar: 6 },
  { id: 7, x: 1565, top: 337, head: 362, bottom: 647, foot: 672, bar: 5 },
];

const piers = [
  { shape: "M340 572H357.500L369.500 800H340z", mid: "" },
  { shape: "M548 572.500H576L584.500 802.500H538z", mid: "M560.500 573L555 802" },
  { shape: "M795.500 548.500H821.500L830.500 779H787z", mid: "M809.500 549L806.500 779" },
  { shape: "M1066.500 511.500H1091.500L1098.500 741.500H1059z", mid: "M1081.500 511L1080.500 742" },
  { shape: "M1355.500 468.500H1377L1383.500 699.500H1348.500z", mid: "M1370.500 468V699" },
];

const points = [
  [361, 804], [366, 807], [425, 811], [434, 811], [507, 809], [519, 808], [531, 807], [582, 802],
  [634, 796], [742, 785], [855, 773], [913, 767], [972, 759], [1032, 749], [1093, 738], [1155, 728], [1158, 727],
  [1218, 719], [1345, 701], [1410, 692], [1417, 691], [1475, 684], [1540, 676],
];

function WorkPlane({ x, y, cy, selected }) {
  return (
    <g stroke={selected ? "#1f4fc0" : "#2f97cc"}>
      <rect x={x - 17.5} y={y + 0.5} width="36" height={selected ? 51 : 50} fill={selected ? "#5b7bd0" : "#a6a6a6"} strokeWidth={selected ? 1.5 : 1} />
      <path d={`M${x + 0.5} ${y}v50M${x - 35} ${cy + 0.5}h70`} />
    </g>
  );
}

function Scene() {
  return (
    <svg viewBox="357 163 1229 667" preserveAspectRatio="xMinYMin slice" className="block w-full h-full" role="img" aria-label="Vue 3D du viaduc">
      <g fill="none" stroke="#2f97cc">
        <path d="M350 777h12v50h-12M369 774l8 2-14 52" />
      </g>
      {columns.map((c) => (
        <g key={c.id}>
          <WorkPlane x={c.x} y={c.top} cy={c.head} selected={c.selected} />
          <WorkPlane x={c.x} y={c.bottom} cy={c.foot} />
        </g>
      ))}
      <circle cx="797" cy="780" r="4.500" />
      <path d="M357 804L380 811 434 812 482 811 531 807 582 802 687 791 797 780 936 764 1093 738 1218 719 1281 710 1345 701 1565 673 1586 669" fill="none" stroke="#000" />
      {piers.map((p) => (
        <g key={p.shape} stroke="#222">
          <path d={p.shape} fill="#fff" />
          <path d={p.mid} />
        </g>
      ))}
      <path d="M571 803L582 802M817 778L830 776M1376 698L1384 697" stroke="#000" />
      {columns.map((c) => (
        <g key={c.id}>
          <rect x={c.x - c.bar / 2 + 0.5} y={c.head} width={c.bar} height={c.foot - c.head} fill="#808000" />
          {!c.selected && <rect x={c.x - c.bar / 2 + 0.5} y={c.head} width={c.bar} height={c.top + 50 - c.head} fill="#a8a800" />}
          <rect x={c.x - c.bar / 2 + 0.5} y={c.bottom} width={c.bar} height={c.foot - c.bottom} fill="#a8b800" />
          <path d={`M${c.x + 0.5} ${c.head}V${c.top + 50}M${c.x + 0.5} ${c.bottom}V${c.foot}`} stroke="#2f8a10" />
          <circle cx={c.x + 0.5} cy={c.foot} r="5" fill="#1fd8f0" />
          <path d={`M${c.x - 3} ${c.foot - 3}h7v4l-3.500 3-3.500-3z`} fill="#12d838" />
          {!c.selected && (
            <>
              <circle cx={c.x + 0.5} cy={c.head + 0.5} r="5" fill="#10181c" />
              <path d={`M${c.x - 5} ${c.head + 0.5}h10M${c.x + 0.5} ${c.head - 5}v10`} stroke="#1f5f80" />
            </>
          )}
          <text x={c.x - 3} y={c.bottom + 2} fontSize="9" className="font-['DejaVu_Sans',sans-serif]">{c.id}</text>
        </g>
      ))}
      <circle cx="380" cy="811" r="5" fill="#444" />
      <circle cx="386" cy="812" r="4" />
      {points.map(([x, y]) => <circle key={x} cx={x} cy={y} r="5" />)}
      <path d="M556 803h4M800 780h4M1077 742h4M1364 700h4" stroke="#1fb8f0" strokeWidth="2" />

      {/* selection gizmo */}
      <rect x="933.5" y="590" width="6" height="19" fill="#1f5a1f" />
      <path d="M936.500 550v25" stroke="#20207a" strokeWidth="1.500" />
      <path d="M936.500 532l-4 16h8z" fill="#3b36c8" stroke="#20207a" />
      <path d="M902 583.500h30" stroke="#15603a" />
      <path d="M941 583.500h32" stroke="#40206a" />
      <path d="M900 583.500l10-4c5 0 5 8 0 8z" fill="#18c04a" stroke="#15603a" />
      <path d="M973 583.500l-10-4c-5 0-5 8 0 8z" fill="#c8203c" stroke="#5a1a4a" />
      <circle cx="936.500" cy="583.500" r="5.500" fill="#1d4fd0" />
      <path d="M923.500 578v-13.500H933" fill="none" stroke="#a02040" strokeWidth="2" />
      <path d="M950.500 578v-13.500H940" fill="none" stroke="#189048" strokeWidth="2" />
    </svg>
  );
}

function NavigationBar() {
  return (
    <div className="absolute top-[58px] right-px flex flex-col items-center w-7 h-[98px] pt-[2px] rounded border-2 border-[#6b6b6b] bg-[#a0a0a0]">
      <button aria-label="Fermer la barre de navigation" className="self-end mr-px"><Svg w={7} h={7}><circle cx="3.500" cy="3.500" r="3" stroke="#666" /><path d="M2 2l3 3M5 2L2 5" stroke="#666" /></Svg></button>
      <button aria-label="Disque de navigation" className="mt-2">
        <Svg w={20} h={20}><circle cx="8.500" cy="8.500" r="7.500" fill="#c2c2c2" stroke="#e0e0e0" /><circle cx="8.500" cy="8.500" r="3.500" fill="#d8d8d8" stroke="#777" /><path d="M11 12l2-2h6v7l-2 2h-6z" fill="#8fb8dd" stroke="#5580aa" /></Svg>
      </button>
      <Arrow className="mt-[5px]" color="#666" />
      <span className="w-[22px] h-px mt-1 bg-[#6b6b6b]" />
      <button aria-label="Zoom région" className="mt-[6px]">
        <Svg w={15} h={14}><path d="M1 13V1h10v5" stroke="#777" strokeDasharray="7 1" /><circle cx="9.500" cy="8.500" r="3" fill="#d0d0d0" stroke="#777" /><path d="M12 11l2 2" stroke="#777" strokeWidth="2" /></Svg>
      </button>
      <Arrow className="mt-2" color="#666" />
      <button aria-label="Options de navigation" className="self-end mt-auto mb-px mr-px"><Svg w={7} h={7}><circle cx="3.500" cy="3.500" r="3" stroke="#666" /><path d="M2 3h3L3.500 5z" fill="#666" stroke="none" /></Svg></button>
    </div>
  );
}

function Viewport() {
  return (
    <div className="relative flex-1 overflow-hidden bg-[#808080]">
      <Scene />
      <Svg w={40} h={32} className="absolute top-[14px] right-[9px]">
        <path d="M1 28l19 3 19-3-6-1H7z" fill="#6e6e6e" stroke="none" />
        <path d="M3 3l17-2v28L3 26z" fill="#aaa" stroke="#999" />
        <path d="M20 1l16 2v23l-16 3z" fill="#b4b4b4" stroke="#999" />
        <g fill="#555" stroke="none" fontSize="6"><text x="4" y="17">UCHE</text><text x="21" y="17">AVAN</text></g>
      </Svg>
      <NavigationBar />
      <div role="tooltip" className="absolute left-[595px] top-[449px] px-1 h-4 leading-[14px] border border-[#8a8a20] bg-[#ffff00] text-[#55551a] whitespace-nowrap shadow-[3px_3px_2px_rgba(0,0,0,0.4)]">
        Points de référence : Point de référence
      </div>
    </div>
  );
}

export default function App() {
  return (
    <div className="flex flex-col h-screen overflow-hidden bg-[#cbcbcb] font-['Roboto',sans-serif] text-[10px] leading-4 text-[#1f1f1f]">
      <TitleBar />
      <RibbonTabs />
      <Ribbon />
      <OptionsBar />
      <main className="flex flex-1 min-h-0">
        <aside className="flex flex-col w-[354px] shrink-0 bg-[#f0f0f0] border-r border-[#bdbdbd]">
          <PropertiesPanel />
          <ProjectBrowser />
        </aside>
        <div className="flex flex-col flex-1 min-w-0">
          <DocumentTabs />
          <div className="flex flex-1 min-h-0 border-l-2 border-white ml-px">
            <Viewport />
            <div className="flex flex-col items-center justify-between w-[14px] py-1 bg-[#f0f0f0] border-l border-white">
              <button aria-label="Défiler vers le haut"><Chevron up /></button>
              <div className="w-3 h-[14px] bg-[#cdcdcd]" />
              <button aria-label="Défiler vers le bas"><Chevron /></button>
            </div>
          </div>
        </div>
      </main>
    </div>
  );
}
